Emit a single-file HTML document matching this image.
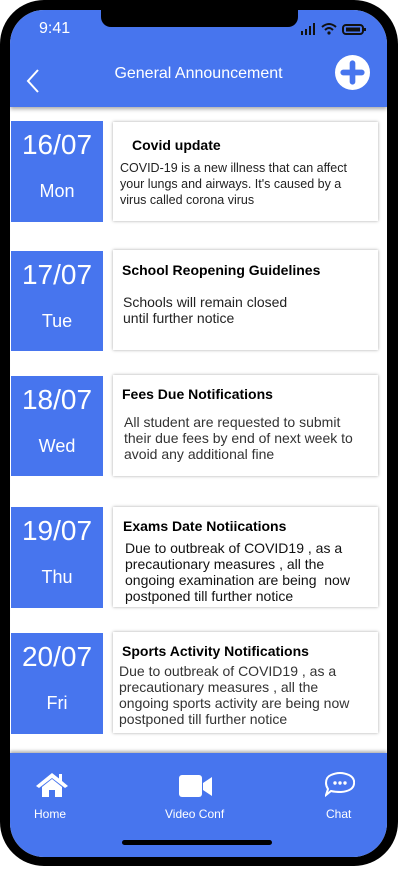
<!DOCTYPE html>
<html><head><style>
*{margin:0;padding:0;box-sizing:border-box}
body{width:400px;height:870px;background:#fff;font-family:"Liberation Sans",sans-serif;position:relative;overflow:hidden}
.phone{position:absolute;left:0;top:0;width:398px;height:866px;background:#000;border-radius:44px}
.screen{position:absolute;left:10px;top:10px;width:377px;height:847px;background:#fff;border-radius:34px;overflow:hidden}
.hdr{position:absolute;left:0;top:0;width:377px;height:97px;background:#4775ee;box-shadow:0 2px 4px rgba(0,0,0,.35)}
.notch{position:absolute;left:91px;top:0;width:197px;height:17px;background:#000;border-radius:0 0 10px 10px}
.time{position:absolute;left:29px;top:10px;color:#fff;font-size:16px}
.title{position:absolute;left:0;width:377px;top:55px;text-align:center;color:#fff;font-size:16px}
.date{position:absolute;left:1px;width:92px;background:#4775ee;color:#fff;text-align:center}
.date .d{font-size:28px;margin-top:8px}
.date .w{font-size:18px;margin-top:20px}
.card{position:absolute;left:103px;width:265px;background:#fff;box-shadow:0 0 3px rgba(0,0,0,.35);color:#222}
.card b{display:block;font-size:14px;color:#000}
.card p{font-size:14px;line-height:16px}
.nav{position:absolute;left:0;top:743px;width:377px;height:104px;background:#4775ee;box-shadow:0 -2px 3px rgba(0,0,0,.3)}
.lbl{position:absolute;top:54px;color:#fff;font-size:12px}
.bar{position:absolute;left:112px;top:87px;width:150px;height:5px;background:#000;border-radius:3px}
</style></head><body>
<div class="phone"><div class="screen">
<div class="hdr">
<div class="notch"></div>
<div class="time">9:41</div>
<svg style="position:absolute;left:290px;top:12px" width="80" height="14" viewBox="0 0 80 14">
<rect x="1" y="9" width="2" height="4" fill="#111"/><rect x="5" y="7" width="2" height="6" fill="#111"/><rect x="9" y="4" width="2" height="9" fill="#111"/><rect x="13" y="1" width="2" height="12" fill="#111"/>
<path d="M22 5 Q29 -1 36 5" stroke="#111" stroke-width="2" fill="none"/><path d="M25 8 Q29 4 33 8" stroke="#111" stroke-width="2" fill="none"/><circle cx="29" cy="11" r="1.6" fill="#111"/>
<rect x="43" y="3" width="20" height="9" rx="3" fill="none" stroke="#111" stroke-width="2"/><rect x="46" y="5.5" width="14" height="4" fill="#111"/><rect x="64" y="6" width="2" height="3" fill="#111"/>
</svg>
<svg style="position:absolute;left:15px;top:58px" width="16" height="26"><path d="M13 2 L3 13 L13 24" stroke="#fff" stroke-width="2" fill="none"/></svg>
<div class="title">General Announcement</div>
<svg style="position:absolute;left:325px;top:45px" width="35" height="35" viewBox="0 0 34 34"><circle cx="17" cy="17" r="17" fill="#fff"/><path d="M17 8 V26 M8 17 H26" stroke="#4775ee" stroke-width="5.5" stroke-linecap="round"/></svg>
</div>

<div class="date" style="top:111px;height:101px"><div class="d">16/07</div><div class="w">Mon</div></div>
<div class="card" style="top:112px;height:99px;padding:15px 8px 0 7px"><b style="margin-left:12px;margin-bottom:7px">Covid update</b><p style="font-size:12.5px">COVID-19 is a new illness that can affect your lungs and airways. It's caused by a virus called corona virus</p></div>

<div class="date" style="top:241px;height:100px"><div class="d">17/07</div><div class="w">Tue</div></div>
<div class="card" style="top:240px;height:100px;padding:12px 8px 0 9px"><b style="margin-bottom:16px">School Reopening Guidelines</b><p style="margin-left:1px">Schools will remain closed<br>until further notice</p></div>

<div class="date" style="top:366px;height:100px"><div class="d">18/07</div><div class="w">Wed</div></div>
<div class="card" style="top:365px;height:101px;padding:11px 8px 0 9px"><b style="margin-bottom:12px">Fees Due Notifications</b><p style="margin-left:2px;color:#333">All student are requested to submit their due fees by end of next week to avoid any additional fine</p></div>

<div class="date" style="top:497px;height:101px"><div class="d">19/07</div><div class="w">Thu</div></div>
<div class="card" style="top:497px;height:100px;padding:11px 8px 0 10px"><b style="margin-bottom:6px">Exams Date Notiications</b><p style="margin-left:2px;color:#111">Due to outbreak of COVID19 , as a precautionary measures , all the ongoing examination are being &nbsp;now postponed till further notice</p></div>

<div class="date" style="top:623px;height:101px"><div class="d">20/07</div><div class="w">Fri</div></div>
<div class="card" style="top:622px;height:101px;padding:11px 8px 0 6px"><b style="margin-left:3px;margin-bottom:4px">Sports Activity Notifications</b><p style="color:#333">Due to outbreak of COVID19 , as a precautionary measures , all the ongoing sports activity are being now postponed till further notice</p></div>

<div class="nav">
<svg style="position:absolute;left:25px;top:19px" width="34" height="26" viewBox="0 0 34 26"><path d="M17 1 L1 14 L4 16 L17 6 L30 16 L33 14 L27 9 V2 H24 V6.5 Z" fill="#fff"/><path d="M7 15 L17 7 L27 15 V25 H20 V18 H14 V25 H7 Z" fill="#fff"/></svg>
<svg style="position:absolute;left:169px;top:22px" width="34" height="23" viewBox="0 0 34 23"><rect x="0" y="0" width="23" height="22" rx="3" fill="#fff"/><path d="M24 8 L33 2 V21 L24 15 Z" fill="#fff"/></svg>
<svg style="position:absolute;left:315px;top:19px" width="30" height="28" viewBox="0 0 30 28"><path d="M6 3 Q15 -1 24 3 Q30 6 29 12 Q28 19 16 20 Q10 20 6 19 L1 23 L3 17 Q1 14 1 11 Q1 5 6 3 Z" fill="none" stroke="#fff" stroke-width="2"/><circle cx="10" cy="11" r="1.7" fill="#fff"/><circle cx="15" cy="11" r="1.7" fill="#fff"/><circle cx="20" cy="11" r="1.7" fill="#fff"/></svg>
<div class="lbl" style="left:24px">Home</div>
<div class="lbl" style="left:155px">Video Conf</div>
<div class="lbl" style="left:316px">Chat</div>
<div class="bar"></div>
</div>
</div></div>
</body></html>
